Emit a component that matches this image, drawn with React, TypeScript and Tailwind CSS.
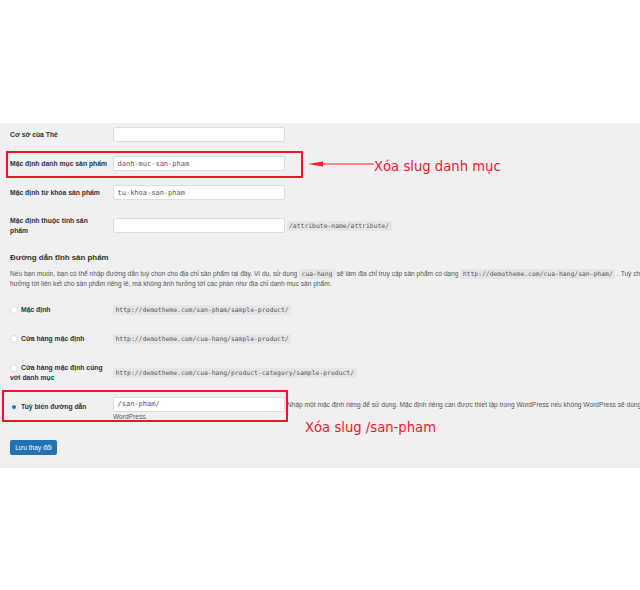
const sans = "font-['Liberation_Sans',sans-serif]";

function Label({ children }: { children: React.ReactNode }) {
  return <div className="w-[103px] shrink-0 text-[6.8px] leading-[10px] font-bold text-[#2c3338]">{children}</div>;
}

function Input({ value }: { value?: string }) {
  return (
    <div className="w-[172px] h-[15px] shrink-0 bg-white border border-[#dcdcde] rounded-[2px] pl-[3.5px] font-['DejaVu_Sans_Mono',monospace] text-[7px] leading-[14px] text-[#50575e]">
      {value}
    </div>
  );
}

function Code({ children }: { children: React.ReactNode }) {
  return (
    <span className="inline-block bg-[#e6e6e6] px-[2.5px] font-['DejaVu_Sans_Mono',monospace] text-[#50575e] text-[6.4px] leading-[10px]">
      {children}
    </span>
  );
}

function Radio({ checked }: { checked?: boolean }) {
  return (
    <span className="w-[7.5px] h-[7.5px] shrink-0 rounded-full bg-white border border-[#dcdcde] flex items-center justify-center">
      {checked && <span className="w-[4px] h-[4px] rounded-full bg-[#2271b1]" />}
    </span>
  );
}

function RadioRow({ label, url, className }: { label: React.ReactNode; url: string; className: string }) {
  return (
    <div className={`flex items-center ${className}`}>
      <div className="w-[103px] shrink-0 flex items-start gap-[3.5px] text-[6.8px] leading-[10px] font-bold text-[#2c3338]">
        <span className="pt-[1px]"><Radio /></span>
        <span>{label}</span>
      </div>
      <Code>{url}</Code>
    </div>
  );
}

function Arrow({ className, d }: { className: string; d: string }) {
  return <svg className={className} viewBox="0 0 66 10" fill="none"><path d={d} stroke="#ff1a2e" strokeWidth="1" /><path d="M0 5 L15 2.5 L15 7.5 Z" fill="#ff1a2e" /></svg>;
}

export default function App() {
  return (
    <div className={`relative w-[640px] h-[590px] overflow-hidden bg-white ${sans}`}>
      <div className="mt-[123px] h-[345px] bg-[#f0f0f0] pl-[10px] pt-[4px] overflow-hidden">
        <div className="flex items-center h-[15px]"><Label>Cơ sở của Thẻ</Label><Input /></div>
        <div className="flex items-center h-[15px] mt-[14px]"><Label>Mặc định danh mục sản phẩm</Label><Input value="danh-muc-san-pham" /></div>
        <div className="flex items-center h-[15px] mt-[14px]"><Label>Mặc định từ khóa sản phẩm</Label><Input value="tu-khoa-san-pham" /></div>
        <div className="flex items-center h-[15px] mt-[18px]">
          <div className="w-[103px] shrink-0 pr-[18px] text-[6.8px] leading-[10px] font-bold text-[#2c3338]">Mặc định thuộc tính sản phẩm</div>
          <Input />
          <div className="ml-[1.5px] flex"><Code>/attribute-name/attribute/</Code></div>
        </div>
        <h2 className="mt-[19px] text-[7.9px] leading-[12px] font-bold text-[#2c3338]">Đường dẫn tĩnh sản phẩm</h2>
        <div className="mt-[5px] text-[6.6px] leading-[10px] text-[#50575e] whitespace-nowrap">
          <p>
            Nếu bạn muốn, bạn có thể nhập đường dẫn tuỳ chọn cho địa chỉ sản phẩm tại đây. Ví dụ, sử dụng <Code>cua-hang</Code> sẽ làm địa chỉ truy cập sản phẩm có dạng <Code>http://demotheme.com/cua-hang/san-pham/</Code> . Tuỳ chọn
          </p>
          <p>hưởng tới liên kết cho sản phẩm riêng lẻ, mà không ảnh hưởng tới các phần như địa chỉ danh mục sản phẩm.</p>
        </div>
        <RadioRow className="mt-[15px] h-[12px]" label="Mặc định" url="http://demotheme.com/san-pham/sample-product/" />
        <RadioRow className="mt-[17px] h-[12px]" label="Cửa hàng mặc định" url="http://demotheme.com/cua-hang/sample-product/" />
        <div className="flex items-center mt-[18px] h-[20px]">
          <div className="w-[103px] shrink-0 flex items-start gap-[3.5px] text-[6.8px] leading-[10px] font-bold text-[#2c3338]">
            <span className="pt-[1px]"><Radio /></span>
            <span className="whitespace-nowrap">Cửa hàng mặc định cùng<br /><span className="-ml-[11px]">với danh mục</span></span>
          </div>
          <Code>http://demotheme.com/cua-hang/product-category/sample-product/</Code>
        </div>
        <div className="flex mt-[14px] h-[27px]">
          <div className="w-[103px] shrink-0 flex items-center h-[15px] mt-[2px] gap-[3.5px] text-[6.8px] leading-[10px] font-bold text-[#2c3338]">
            <Radio checked /><span>Tuỳ biến đường dẫn</span>
          </div>
          <div className="shrink-0">
            <div className="w-[172px] h-[15px] bg-white border border-[#dcdcde] rounded-[2px] pl-[3.5px] font-['DejaVu_Sans_Mono',monospace] text-[7px] leading-[13px] text-[#50575e]">/san-pham/</div>
            <div className="text-[6.6px] leading-[9px] text-[#50575e]">WordPress.</div>
          </div>
          <div className="ml-[2px] mt-[3px] text-[6.6px] leading-[10px] text-[#50575e] whitespace-nowrap">Nhập một mặc định riêng để sử dụng. Mặc định riêng cần được thiết lập trong WordPress nếu không WordPress sẽ dùng</div>
        </div>
        <button className="mt-[16px] block w-[47px] h-[15px] bg-[#2271b1] rounded-[2px] text-white text-[6.6px] leading-[15px] text-center">Lưu thay đổi</button>
      </div>

      <div className="absolute left-[6px] top-[151px] w-[297px] h-[27px] border-2 border-[#f01428]" />
      <div className="absolute left-[2px] top-[390px] w-[286px] h-[32px] border-2 border-[#f01428]" />
      <Arrow className="absolute left-[308px] top-[159px] w-[66px] h-[10px]" d="M10 5 H66" />
      <div className="absolute left-[374px] top-[157px] font-['DejaVu_Sans',sans-serif] text-[13.2px] leading-[20px] text-[#f5152b] whitespace-nowrap">Xóa slug danh mục</div>
      <div className="absolute left-[305px] top-[418px] font-['DejaVu_Sans',sans-serif] text-[13.2px] leading-[20px] text-[#f5152b] whitespace-nowrap">Xóa slug /san-pham</div>
    </div>
  );
}
